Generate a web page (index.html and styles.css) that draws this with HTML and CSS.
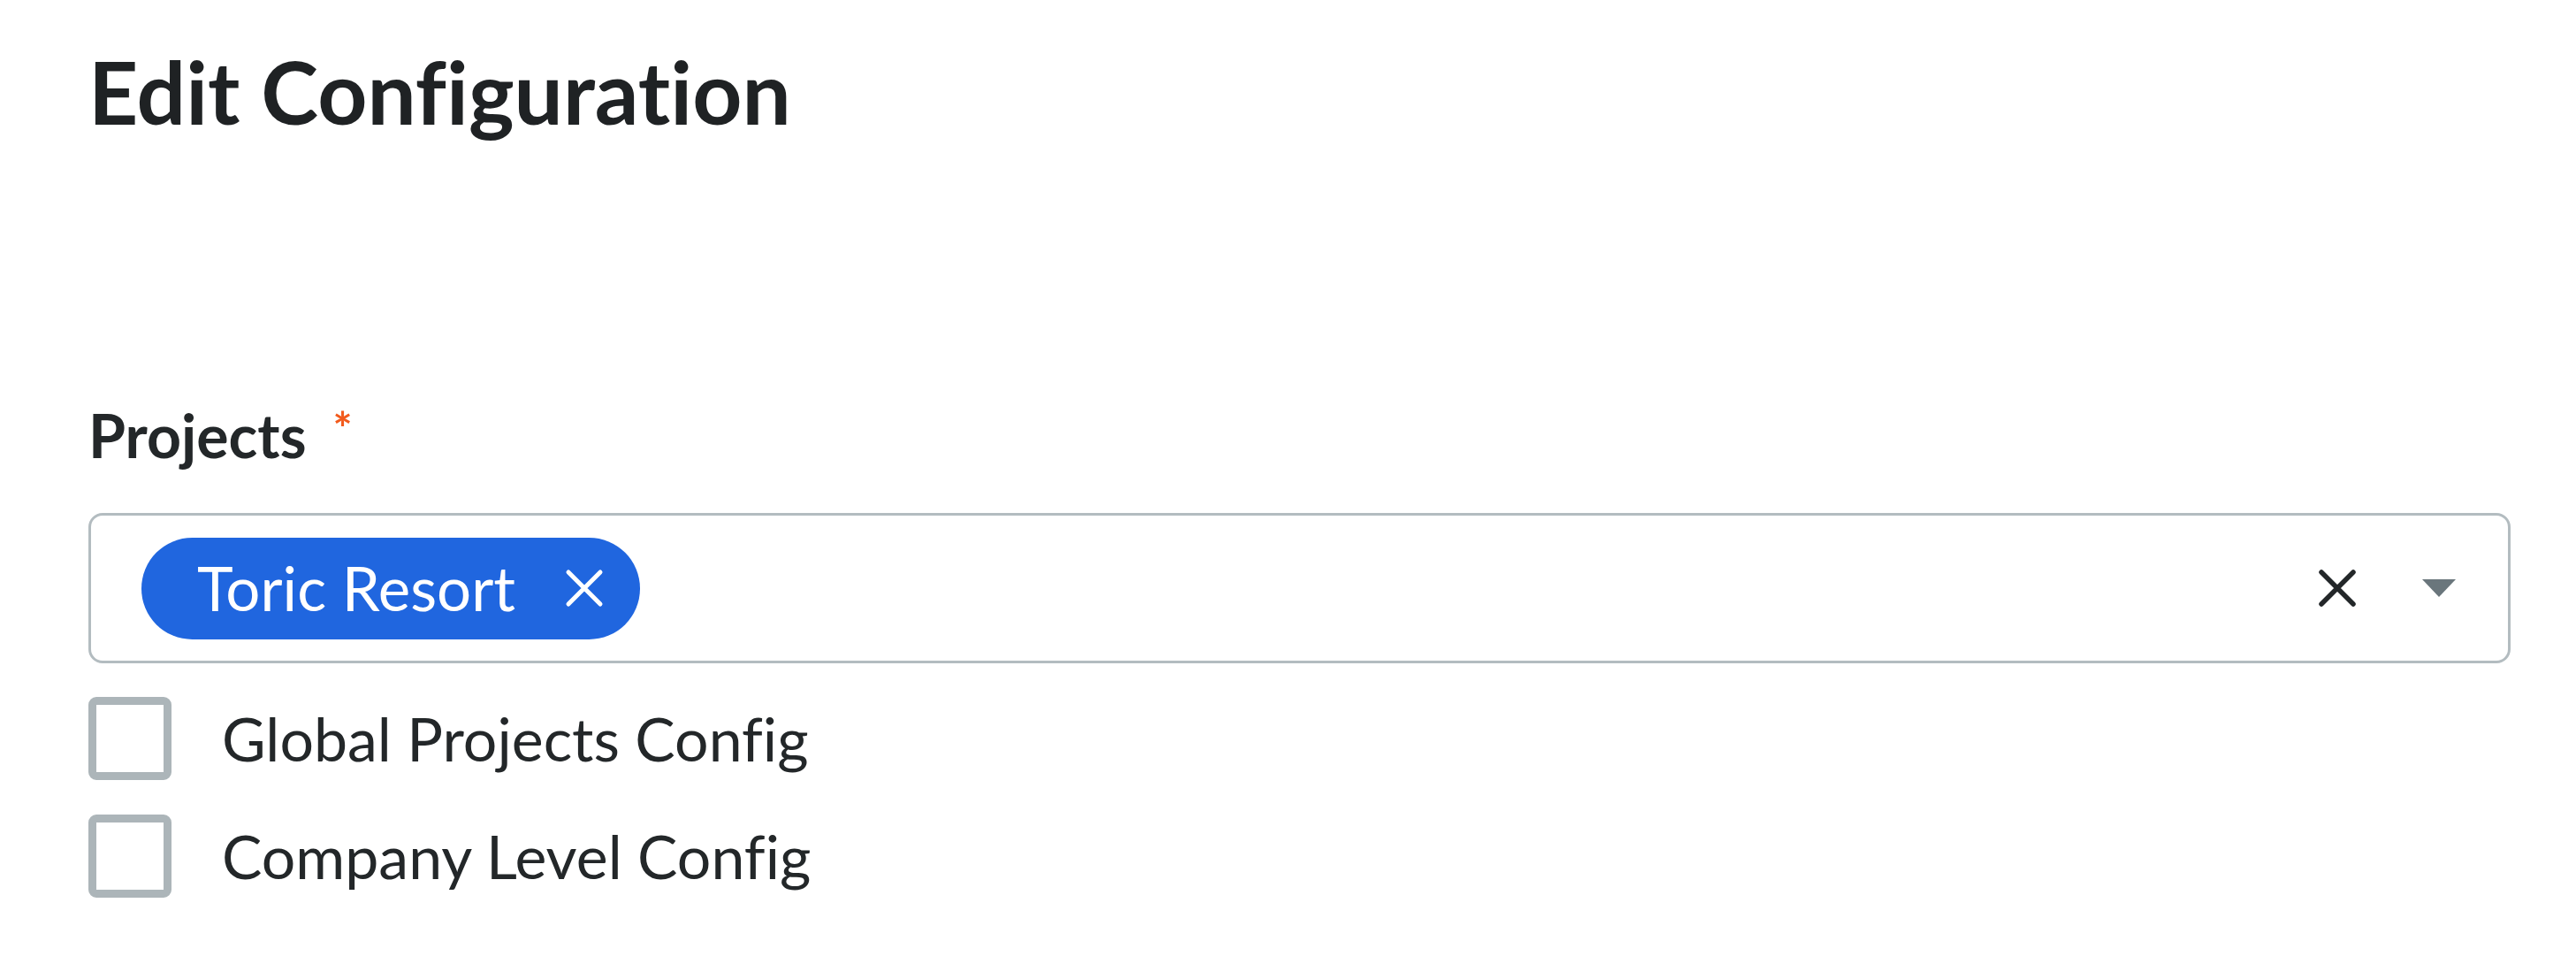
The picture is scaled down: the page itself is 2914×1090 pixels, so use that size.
FILE: index.html
```html
<!DOCTYPE html>
<html lang="en">
<head>
<meta charset="utf-8">
<title>Edit Configuration</title>
<link rel="stylesheet" href="styles.css">
</head>
<body>
<main class="page">
  <h1 class="title">Edit Configuration</h1>
  <section class="field">
    <label class="field-label">Projects<span class="required">*</span></label>
    <div class="select">
      <div class="chips">
        <span class="chip">
          <span class="chip-text">Toric Resort</span>
          <svg class="chip-x" viewBox="0 0 44 44" width="44" height="44" aria-hidden="true">
            <path d="M4 4 L40 40 M40 4 L4 40" stroke="#ffffff" stroke-width="5" stroke-linecap="round"/>
          </svg>
        </span>
      </div>
      <div class="select-actions">
        <svg class="clear-x" viewBox="0 0 44 44" width="44" height="44" aria-hidden="true">
          <path d="M4 4 L40 40 M40 4 L4 40" stroke="#232729" stroke-width="5.5" stroke-linecap="round"/>
        </svg>
        <svg class="caret" viewBox="0 0 38 20" width="38" height="20" aria-hidden="true">
          <path d="M0 0 H38 L19 20 Z" fill="#6a767c"/>
        </svg>
      </div>
    </div>
    <div class="options">
      <label class="option"><span class="box"></span><span class="option-text">Global Projects Config</span></label>
      <label class="option"><span class="box"></span><span class="option-text">Company Level Config</span></label>
    </div>
  </section>
</main>
</body>
</html>
```

FILE: styles.css
```css
html, body {
  margin: 0;
  padding: 0;
  background: #ffffff;
}

body {
  font-family: Lato, "Open Sans", "Liberation Sans", sans-serif;
  color: #232729;
  font-variant-ligatures: none;
  font-feature-settings: "liga" 0, "clig" 0;
}

.page {
  padding: 46px 74px 0 100px;
}

.title {
  margin: 0;
  font-size: 98px;
  line-height: 115px;
  font-weight: 700;
  color: #1f2224;
}

.field {
  margin-top: 282px;
}

.field-label {
  display: block;
  font-size: 68px;
  line-height: 82px;
  font-weight: 700;
  color: #232729;
}

.required {
  color: #f25a1c;
  font-size: 52px;
  font-weight: 700;
  margin-left: 30px;
  vertical-align: 14px;
}

.select {
  margin-top: 47px;
  box-sizing: border-box;
  height: 170px;
  border: 3px solid #b3bcc0;
  border-radius: 16px;
  display: flex;
  align-items: center;
  justify-content: space-between;
  padding: 0 59px 0 57px;
}

.chips {
  display: flex;
  align-items: center;
}

.chip {
  display: flex;
  align-items: center;
  box-sizing: border-box;
  height: 115px;
  border-radius: 58px;
  background: #2066df;
  color: #ffffff;
  padding: 0 41px 0 63px;
}

.chip-text {
  font-size: 69px;
  line-height: 84px;
}

.chip-x {
  display: block;
  margin-left: 56px;
}

.select-actions {
  display: flex;
  align-items: center;
  gap: 74px;
}

.clear-x, .caret {
  display: block;
}

.options {
  margin-top: 38px;
  display: flex;
  flex-direction: column;
  gap: 39px;
}

.option {
  display: flex;
  align-items: center;
  height: 94px;
}

.box {
  box-sizing: border-box;
  width: 94px;
  height: 94px;
  border: 9px solid #acb5b9;
  border-radius: 9px;
  background: #ffffff;
  flex-shrink: 0;
}

.option-text {
  margin-left: 57px;
  font-size: 68px;
  line-height: 84px;
  color: #232729;
}
```
